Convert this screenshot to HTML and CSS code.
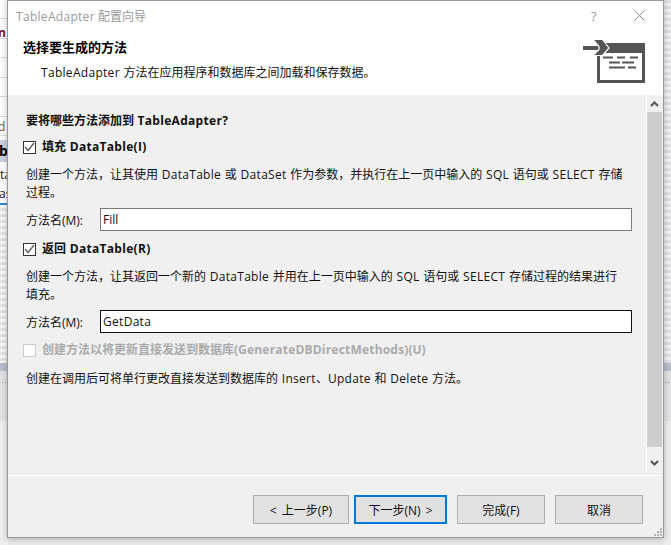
FILE: index.html
```html
<!DOCTYPE html>
<html lang="zh-CN">
<head>
<meta charset="utf-8">
<title>TableAdapter 配置向导</title>
<link rel="stylesheet" href="styles.css">
</head>
<body>
<div class="desktop">
  <div class="behind behind-left">
    <div class="list-rows"><span class="bl bl-a">n</span><span class="bl bl-d2">d</span></div>
    <div class="list-sel"><span class="bl-b">b</span></div>
    <div class="list-plain"><span class="bl-c">ta</span><span class="bl-e">as</span></div>
    <div class="tab-line"></div>
    <div class="stripes stripes-left"></div>
    <div class="band"></div>
    <div class="after-band"><span class="grip-dots"></span></div>
  </div>
  <div class="behind behind-right">
    <div class="stripes stripes-right"></div>
    <div class="band"></div>
    <div class="after-band"><span class="grip-dots"></span></div>
  </div>
  <div class="window">
    <div class="titlebar">
      <span class="title"><span class="en">TableAdapter</span> 配置向导</span>
      <span class="help">?</span>
      <svg class="close" width="11" height="11" viewBox="0 0 11 11"><path d="M0.500 0.500L10.500 10.500M10.500 0.500L0.500 10.500" stroke="#8c8c8c" stroke-width="1" fill="none"/></svg>
    </div>
    <div class="header">
      <div class="header-text">
        <h1 class="h-title">选择要生成的方法</h1>
        <p class="h-sub"><span class="en">TableAdapter</span> 方法在应用程序和数据库之间加载和保存数据。</p>
      </div>
      <svg class="wizard-icon" width="62" height="43" viewBox="0 0 62 43">
        <path fill="#555" fill-rule="evenodd" d="M14 3H62V43H14ZM17 13V40H59V13Z"/>
        <path fill="#555" d="M0 6H14V10H0Z"/>
        <path fill="#555" stroke="#fff" stroke-width="1.200" d="M10 -0.500H19.500L26 8L19.500 15.500H10L16 9.500V6.500Z"/>
        <path fill="#555" d="M20 16.500H30V18.500H20ZM34 16.500H42V18.500H34ZM47 16.500H55V18.500H47ZM26 21.500H37V23.500H26ZM39 21.500H51V23.500H39ZM26 26.500H42V28.500H26ZM45 26.500H53V28.500H45Z"/>
      </svg>
    </div>
    <div class="body">
      <div class="content">
        <div class="form">
          <p class="question">要将哪些方法添加到 <span class="en">TableAdapter?</span></p>
          <label class="check check-a">
            <span class="box"><svg width="11" height="10" viewBox="0 0 11 10"><path d="M1 5L4 8.500L10 1" stroke="#555" stroke-width="1.300" fill="none"/></svg></span>
            <span>填充 <span class="en">DataTable(I)</span></span>
          </label>
          <p class="desc desc-a">创建一个方法，让其使用 <span class="en">DataTable</span> 或 <span class="en">DataSet</span> 作为参数，并执行在上一页中输入的 <span class="en">SQL</span> 语句或 <span class="en">SELECT</span> 存储<br>过程。</p>
          <div class="field field-a">
            <span class="field-label">方法名(M):</span>
            <div class="input">Fill</div>
          </div>
          <label class="check check-b">
            <span class="box"><svg width="11" height="10" viewBox="0 0 11 10"><path d="M1 5L4 8.500L10 1" stroke="#555" stroke-width="1.300" fill="none"/></svg></span>
            <span>返回 <span class="en">DataTable(R)</span></span>
          </label>
          <p class="desc desc-b">创建一个方法，让其返回一个新的 <span class="en">DataTable</span> 并用在上一页中输入的 <span class="en">SQL</span> 语句或 <span class="en">SELECT</span> 存储过程的结果进行<br>填充。</p>
          <div class="field field-b">
            <span class="field-label">方法名(M):</span>
            <div class="input input-focus"><span class="en">GetData</span></div>
          </div>
          <label class="check check-c disabled">
            <span class="box"></span>
            <span>创建方法以将更新直接发送到数据库(<span class="en">GenerateDBDirectMethods</span>)(U)</span>
          </label>
          <p class="desc desc-c">创建在调用后可将单行更改直接发送到数据库的 <span class="en">Insert</span>、<span class="en">Update</span> 和 <span class="en">Delete</span> 方法。</p>
        </div>
        <div class="scrollbar">
          <svg class="arrow arrow-up" width="9" height="6" viewBox="0 0 9 6"><path d="M1 5L4.500 1.500L8 5" stroke="#555" stroke-width="2" fill="none"/></svg>
          <div class="thumb"></div>
          <svg class="arrow arrow-down" width="9" height="6" viewBox="0 0 9 6"><path d="M1 1L4.500 4.500L8 1" stroke="#555" stroke-width="2" fill="none"/></svg>
        </div>
      </div>
      <div class="footer">
        <button class="btn btn-back">&lt; 上一步(P)</button>
        <button class="btn btn-next">下一步(N) &gt;</button>
        <button class="btn btn-finish">完成(F)</button>
        <button class="btn btn-cancel">取消</button>
      </div>
      <svg class="resize-grip" width="8" height="8" viewBox="0 0 8 8"><path fill="#b4b4b4" d="M6 0H8V2H6ZM3 3H5V5H3ZM6 3H8V5H6ZM0 6H2V8H0ZM3 6H5V8H3ZM6 6H8V8H6Z"/></svg>
    </div>
  </div>
</div>
</body>
</html>
```
FILE: styles.css
```css
* { box-sizing: border-box; }
html, body { margin: 0; padding: 0; }
body { font-family: "Open Sans", "Noto Sans CJK SC", sans-serif; font-size: 12px; color: #111; }
.en { letter-spacing: .3px; }
.desktop { position: relative; width: 671px; height: 545px; overflow: hidden; background: #e9e9e9; }

.behind { position: absolute; top: 0; width: 8px; display: flex; flex-direction: column; overflow: hidden; }
.behind-left { left: 0; height: 545px; background: #efefef; }
.behind-right { right: 0; height: 545px; background: #ececec; }
.list-rows { height: 140px; flex: none; position: relative; background: repeating-linear-gradient(#fdfdfd 0 18.500px, #dcdcdc 18.500px 19.500px); }
.bl { position: absolute; line-height: 14px; font-weight: 700; }
.bl-a { top: 26px; left: -2px; color: #7a1040; }
.bl-d2 { top: 120px; left: -2px; color: #8a5a20; font-weight: 400; }
.list-sel { height: 22px; flex: none; background: #c9d2de; font-weight: 700; font-size: 14px; line-height: 22px; color: #000; white-space: nowrap; }
.bl-b { margin-left: -1px; }
.list-plain { height: 41px; flex: none; background: #fff; line-height: 19px; white-space: nowrap; display: flex; flex-direction: column; padding-top: 3px; }
.bl-c { margin-left: 0; }
.bl-e { margin-left: -1px; }
.tab-line { height: 2px; flex: none; background: #2e86d8; }
.stripes { flex: none; height: 158px; }
.stripes-left { background: repeating-linear-gradient(#f6f6f6 0 3px, #e4e4e4 3px 6px); }
.stripes-right { height: 363px; background: repeating-linear-gradient(#dfdfe4 0 3px, #f1f1f3 3px 6px); }
.band { height: 8px; flex: none; background: #b9bccb; }
.after-band { height: 50px; flex: none; background: #e2e2e5; padding: 9px 0 0 1px; }
.grip-dots { display: block; width: 6px; height: 5px; background: radial-gradient(circle, #888 0 1px, transparent 1px) 0 0 / 3px 5px; }

.window { position: absolute; left: 7px; top: 0; width: 657px; height: 538px; background: #f0f0f0; border: 1px solid #9a9a9a; display: flex; flex-direction: column; box-shadow: 0 1px 6px rgba(0,0,0,.25); }
.titlebar { height: 32px; background: #fff; position: relative; flex: none; padding: 8px 0 0 8px; }
.title { color: #999; font-size: 12px; line-height: 16px; display: block; }
.help { position: absolute; left: 583px; top: 6px; color: #999; font-size: 13px; line-height: 18px; }
.close { position: absolute; left: 626px; top: 9px; }
.header { height: 62px; background: #fff; flex: none; display: flex; justify-content: space-between; padding: 0 18px 0 15px; }
.header-text { padding-top: 5px; }
.h-title { margin: 0; font-size: 13px; font-weight: 700; line-height: 18px; color: #000; }
.h-sub { margin: 9px 0 0 18px; font-size: 12px; line-height: 16px; word-spacing: .6px; }
.wizard-icon { flex: none; margin-top: 7px; overflow: visible; }
.body { flex: 1; display: flex; flex-direction: column; min-height: 0; position: relative; }
.content { height: 381px; display: flex; border-bottom: 1px solid #fff; flex: none; }
.form { flex: 1; padding: 17px 14px 0 18px; min-width: 0; }
.question { margin: 0; font-weight: 700; line-height: 18px; word-spacing: .4px; }
.check { display: flex; align-items: center; gap: 6px; font-weight: 700; line-height: 18px; margin-left: -3px; word-spacing: .6px; }
.check-a { margin-top: 8px; }
.check-b { margin-top: 9px; }
.check-c { margin-top: 8px; }
.check-c .en { letter-spacing: .2px; }
.disabled { color: #aaa; }
.box { width: 13px; height: 13px; border: 1px solid #333; background: #fff; display: flex; align-items: center; justify-content: center; flex: none; }
.disabled .box { border-color: #ccc; }
.desc { margin: 0; line-height: 18px; word-spacing: .6px; white-space: nowrap; }
.desc-a { margin-top: 10px; }
.desc-b { margin-top: 10px; }
.desc-c { margin-top: 11px; }
.field { display: flex; align-items: center; }
.field-a { margin-top: 6px; }
.field-b { margin-top: 6px; }
.field-label { width: 74px; flex: none; }
.input { width: 532px; height: 23px; background: #fff; border: 1px solid #7a7a7a; padding: 0 2px; line-height: 21px; }
.input-focus { border-color: #111; }
.scrollbar { width: 16px; height: 376px; flex: none; margin-right: 1px; border-left: 1px solid #fff; display: flex; flex-direction: column; align-items: center; }
.arrow { flex: none; }
.arrow-up { margin: 6px 0 5px; }
.arrow-down { margin: 13px 0 5px; }
.thumb { flex: 1; width: 15px; background: #cdcdcd; }
.footer { flex: 1; display: flex; padding: 19px 0 0 245px; align-items: flex-start; }
.btn { height: 29px; background: #e1e1e1; border: 1px solid #adadad; font: inherit; color: #111; padding: 0; word-spacing: 2px; }
.btn-back { width: 96px; }
.btn-next { width: 93px; margin-left: 5px; border: 2px solid #0078d7; }
.btn-finish { width: 88px; margin-left: 10px; }
.btn-cancel { width: 88px; margin-left: 10px; }
.resize-grip { position: absolute; right: 1px; bottom: 1px; }
```
